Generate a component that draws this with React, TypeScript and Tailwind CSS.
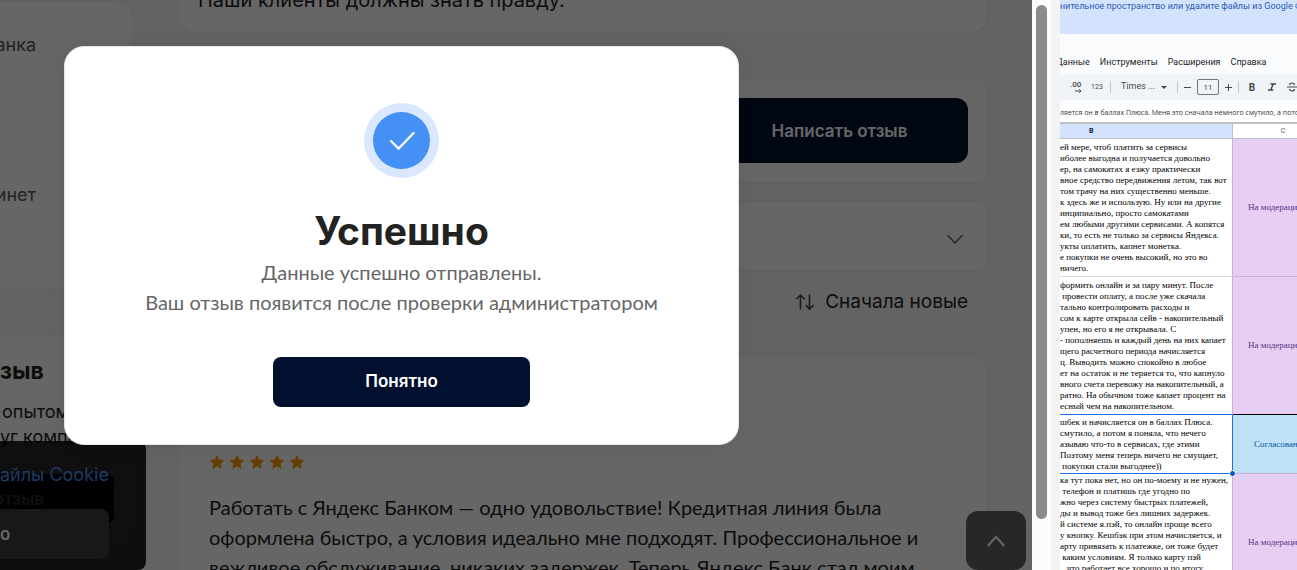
import type { ReactNode } from 'react';
import { clsx } from 'clsx';

const reviewLines = [
  'Работать с Яндекс Банком — одно удовольствие! Кредитная линия была',
  'оформлена быстро, а условия идеально мне подходят. Профессиональное и',
  'вежливое обслуживание, никаких задержек. Теперь Яндекс Банк стал моим',
];

type SheetRow = {
  id: number;
  lines: string[];
  status: string;
  approved?: boolean;
  height: string;
};

const sheetRows: SheetRow[] = [
  {
    id: 1,
    height: 'h-[138px]',
    status: 'На модерации',
    lines: [
      'ей мере, чтоб платить за сервисы',
      'иболее выгодна и получается довольно',
      'ер, на самокатах я езжу практически',
      'вное средство передвижения летом, так вот',
      'том трачу на них существенно меньше.',
      'к здесь же и использую. Ну или на другие',
      'инципиально, просто самокатами',
      'ем любыми другими сервисами. А копятся',
      'ки, то есть не только за сервисы Яндекса.',
      'укты оплатить, капнет монетка.',
      'е покупки не очень высокий, но это во',
      'ничего.',
    ],
  },
  {
    id: 2,
    height: 'h-[138px]',
    status: 'На модерации',
    lines: [
      'формить онлайн и за пару минут. После',
      ' провести оплату, а после уже скачала',
      'тально контролировать расходы и',
      'сом к карте открыла сейв - накопительный',
      'упен, но его я не открывала. С',
      '- пополняешь и каждый день на них капает',
      'щего расчетного периода начисляется',
      'ц. Выводить можно спокойно в любое',
      'ет на остаток и не теряется то, что капнуло',
      'вного счета перевожу на накопительный, а',
      'ратно. На обычном тоже капает процент на',
      'есный чем на накопительном.',
    ],
  },
  {
    id: 3,
    height: 'h-[59px]',
    status: 'Согласовано',
    approved: true,
    lines: [
      'шбек и начисляется он в баллах Плюса.',
      'смутило, а потом я поняла, что нечего',
      'азываю что-то в сервисах, где этими',
      'Поэтому меня теперь ничего не смущает,',
      ' покупки стали выгоднее))',
    ],
  },
  {
    id: 4,
    height: 'h-[138px]',
    status: 'На модерации',
    lines: [
      'ка тут пока нет, но он по-моему и не нужен,',
      ' телефон и платишь где угодно по',
      'жно через систему быстрых платежей,',
      'ды и вывод тоже без лишних задержек.',
      'й системе я.пэй, то онлайн проще всего',
      'у кнопку. Кешбэк при этом начисляется, и',
      'арту привязать к платежке, он тоже будет',
      ' каким условиям. Я только карту пэй',
      '   что работает все хорошо и по итогу',
    ],
  },
];

function Card({ className, children }: { className?: string; children?: ReactNode }) {
  return <div className={clsx('border border-[#ebebeb] bg-white', className)}>{children}</div>;
}

function Star() {
  return (
    <svg viewBox="0 0 16 16" className="size-4" fill="#ff9900" aria-hidden="true">
      <path d="M8 .8l2.2 4.7 5.2.6-3.8 3.6 1 5.2L8 12.3l-4.6 2.6 1-5.2L.6 6.1l5.2-.6z" />
    </svg>
  );
}

function Sidebar() {
  return (
    <aside className="w-[134px] shrink-0 whitespace-nowrap font-['Inter',sans-serif] text-[18px] leading-[30px]">
      <Card className="mt-px h-[289px] rounded-r-[18px] border-l-0 pt-7 text-[#555]">
        <p className="flex w-9 justify-end">анка</p>
        <p className="mt-30 flex w-9 justify-end">инет</p>
      </Card>
      <Card className="mt-11 h-[211px] rounded-r-[18px] border-l-0 pt-5 text-[#222]">
        <h2 className="text-[23px] font-bold leading-8">зыв</h2>
        <div className="mt-3 leading-[25px]">
          <p className="pl-0.5">опытом</p>
          <p>уг компаний</p>
        </div>
        <button className="mt-[25px] flex h-[50px] w-[114px] items-center justify-end rounded-r-lg bg-[#02102f] pr-[70px] text-[17px] font-semibold text-white">
          отзыв
        </button>
      </Card>
    </aside>
  );
}

function Reviews() {
  return (
    <main className="min-w-0 flex-1 font-['Inter',sans-serif] text-[20px] leading-[30px] text-[#222]">
      <Card className="flex h-[34px] flex-col justify-end rounded-b-[18px] border-t-0 px-[19px] pb-[18px]">
        <p>Наши клиенты должны знать правду.</p>
      </Card>
      <Card className="mt-11 flex justify-end rounded-xl p-[19px]">
        <button className="h-[65px] w-[257px] rounded-xl bg-[#02102f] text-[17px] font-semibold text-white">
          Написать отзыв
        </button>
      </Card>
      <Card className="mt-[18px] rounded-xl">
        <button aria-label="Развернуть" className="flex h-[68px] w-full items-center justify-end pr-6 pt-1.5">
          <svg viewBox="0 0 16 16" className="size-4" fill="none" stroke="#666" strokeWidth="1.6" aria-hidden="true">
            <path d="M.5 4.2L8 11.8l7.5-7.6" />
          </svg>
        </button>
      </Card>
      <div className="flex justify-end pb-[38px] pr-5 pt-4">
        <button className="flex items-center gap-2.5 text-[19px]">
          <svg viewBox="0 0 20 18" className="h-[18px] w-5" fill="none" stroke="#444" strokeWidth="1.6" aria-hidden="true">
            <path d="M5.5 16.5V2M1.2 6.2L5.5 2l4.2 4.2M14.500 1.500V16M10.700 12l3.800 4 4.200-4" />
          </svg>
          Сначала новые
        </button>
      </div>
      <Card className="rounded-t-[18px] border-b-0 px-[30px] pb-8 pt-[98px]">
        <div className="flex gap-1">
          <Star />
          <Star />
          <Star />
          <Star />
          <Star />
        </div>
        <div className="mt-[22px] whitespace-nowrap font-['Lato',sans-serif]">
          {reviewLines.map((line) => (
            <p key={line}>{line}</p>
          ))}
        </div>
      </Card>
    </main>
  );
}

function CookieNotice() {
  return (
    <div className="absolute bottom-0 left-0 h-[129px] w-[146px] rounded-r-lg bg-black/85 pt-[19px] font-['Inter',sans-serif] text-[18px] leading-[30px]">
      <a href="#cookie" className="block whitespace-nowrap text-[#4990f2]">
        айлы Cookie
      </a>
      <button className="mt-[19px] flex h-[50px] w-[109px] items-center rounded-r-lg bg-[#3c3c3c] text-[17px] font-semibold text-white">
        о
      </button>
    </div>
  );
}

function SuccessModal() {
  return (
    <div
      role="dialog"
      aria-labelledby="modal-title"
      className="absolute left-16 top-[46px] flex w-[675px] flex-col items-center rounded-[20px] border border-[#e5e5e5] bg-white pb-[37px] pt-14 text-center shadow-[0_0_20px_rgba(0,0,0,0.08)]"
    >
      <div className="flex size-[75px] items-center justify-center rounded-full bg-[#dae8ff]">
        <div className="flex size-[57px] items-center justify-center rounded-full bg-[#4590f4]">
          <svg viewBox="0 0 26 20" className="h-5 w-[26px]" fill="none" stroke="#fff" strokeWidth="2.2" strokeLinecap="round" aria-hidden="true">
            <path d="M2 10l7.600 7.600L24.600 2" />
          </svg>
        </div>
      </div>
      <h1 id="modal-title" className="mt-[29px] font-['Inter',sans-serif] text-[39px] font-bold leading-12 text-[#222]">
        Успешно
      </h1>
      <p className="mt-0.5 font-['Lato',sans-serif] text-[20px] leading-[30px] text-[#666]">
        Данные успешно отправлены.
        <br />
        Ваш отзыв появится после проверки администратором
      </p>
      <button className="mt-10 h-[50px] w-[257px] rounded-lg bg-[#02102f] font-['Inter',sans-serif] text-[17px] font-semibold text-white">
        Понятно
      </button>
    </div>
  );
}

function ReviewSite() {
  return (
    <div className="relative min-w-0 flex-1 overflow-hidden bg-[#f8f8f8]">
      <div className="flex gap-11 pr-11">
        <Sidebar />
        <Reviews />
      </div>
      <CookieNotice />
      <button
        aria-label="Наверх"
        className="absolute bottom-0 right-1.5 flex h-[59px] w-[60px] items-center justify-center rounded-xl bg-[#626262]"
      >
        <svg viewBox="0 0 18 12" className="h-3 w-[18px]" fill="none" stroke="#fff" strokeWidth="2" aria-hidden="true">
          <path d="M.8 11L9 1.800l8.200 9.200" />
        </svg>
      </button>
      <div className="absolute inset-0 bg-black/60" />
      <SuccessModal />
    </div>
  );
}

function ScrollTrack() {
  return (
    <div className="flex w-7 shrink-0">
      <div className="w-[19px] bg-[#fcfcfc] pl-1 pt-[5px]">
        <div className="h-[514px] w-[11px] rounded-full bg-[#8b8b8b]" />
      </div>
      <div className="flex-1 bg-[#f3f3f3]" />
    </div>
  );
}

function Divider() {
  return <span className="h-3 w-px shrink-0 bg-[#c7c7c7]" />;
}

function Toolbar() {
  return (
    <div className="flex h-[26px] items-center gap-1.5 overflow-hidden bg-[#f0f4f9] pl-2.5 text-[8px] text-[#444746]">
      <button aria-label="Увеличить число знаков" className="w-[14px] shrink-0 text-left font-medium leading-2">
        .00
        <svg viewBox="0 0 14 4" className="h-1 w-[14px]" fill="none" stroke="#444746" aria-hidden="true">
          <path d="M5 2h6M9.200.3L11 2 9.200 3.700" />
        </svg>
      </button>
      <button className="w-[14px] shrink-0 text-[7px]">123</button>
      <Divider />
      <div className="relative w-[54px] shrink-0">
        <select aria-label="Шрифт" className="w-full appearance-none bg-transparent pl-1 text-[9px]">
          <option>Times ...</option>
        </select>
        <svg viewBox="0 0 6 3" className="pointer-events-none absolute right-1 top-1.5 h-[3px] w-1.5" fill="#444746" aria-hidden="true">
          <path d="M0 0h6L3 3z" />
        </svg>
      </div>
      <Divider />
      <button aria-label="Уменьшить размер" className="w-[7px] shrink-0">
        <svg viewBox="0 0 7 7" className="size-[7px]" stroke="#444746" aria-hidden="true">
          <path d="M0 3.500h7" />
        </svg>
      </button>
      <input
        aria-label="Размер шрифта"
        defaultValue="11"
        className="h-4 w-[22px] shrink-0 rounded-xs border border-[#747775] text-center text-[8px]"
      />
      <button aria-label="Увеличить размер" className="w-[7px] shrink-0">
        <svg viewBox="0 0 7 7" className="size-[7px]" stroke="#444746" aria-hidden="true">
          <path d="M0 3.500h7M3.500 0v7" />
        </svg>
      </button>
      <Divider />
      <button className="w-[14px] shrink-0 text-[10px] font-bold">B</button>
      <button aria-label="Курсив" className="flex w-[14px] shrink-0 justify-center">
        <svg viewBox="0 0 8 8" className="size-2" fill="none" stroke="#444746" strokeWidth="1.4" aria-hidden="true">
          <path d="M2.500 1H8M0 7h5.400M5.200 1L2.800 7" />
        </svg>
      </button>
      <button aria-label="Зачёркнутый" className="flex w-[14px] shrink-0 justify-center">
        <svg viewBox="0 0 10 10" className="size-2.5" fill="none" stroke="#444746" strokeWidth="1.2" aria-hidden="true">
          <path d="M0 5h10M7.600 3C7.200 1.600 6.200 1 5 1 3.500 1 2.500 1.800 2.500 3M2.400 7C2.800 8.400 3.800 9 5 9c1.500 0 2.500-.8 2.500-2" />
        </svg>
      </button>
    </div>
  );
}

function Spreadsheet() {
  return (
    <section className="w-[237px] shrink-0 overflow-hidden bg-[#f9fbfd] font-['Roboto',sans-serif]">
      <p className="h-[34px] whitespace-nowrap bg-[#d3e3fd] text-[9px] leading-3 text-[#2f5bb7]">
        нительное пространство или удалите файлы из Google Фото
      </p>
      <nav className="-ml-1 flex h-10 items-end gap-2.5 pb-1.5 text-[9px] leading-3 text-[#1f1f1f]">
        <button>Данные</button>
        <button>Инструменты</button>
        <button>Расширения</button>
        <button>Справка</button>
      </nav>
      <Toolbar />
      <p className="mt-1 h-[18px] whitespace-nowrap bg-white font-['Open_Sans',sans-serif] text-[7px] leading-[18px] text-[#333]">
        ляется он в баллах Плюса. Меня это сначала немного смутило, а потом
      </p>
      <table className="w-full table-fixed border-separate border-spacing-0 border-t-2 border-[#c0c0c0] bg-white">
        <thead>
          <tr className="h-[15px] text-[7px] leading-3">
            <th className="w-[173px] border-b border-r border-[#c0c0c0] bg-[#d3e3fd] p-0 pl-[29px] text-left font-bold text-[#041e49]">
              B
            </th>
            <th className="border-b border-[#c0c0c0] p-0 pl-9 font-normal text-[#575a5a]">C</th>
          </tr>
        </thead>
        <tbody>
          {sheetRows.map((row) => (
            <tr key={row.id} className={row.height}>
              <td
                className={clsx(
                  'relative whitespace-pre border-r p-0 font-["Liberation_Serif",serif] text-[9px] leading-[11px] text-black',
                  row.approved
                    ? 'border-b border-[#1a73e8]'
                    : row.id === 2
                      ? 'border-b border-b-[#1a73e8] border-r-[#c5b3d0]'
                      : 'border-b border-b-[#dcdcdc] border-r-[#c5b3d0]',
                  row.id === 4 ? 'pt-px align-top' : 'align-middle',
                )}
              >
                {row.lines.map((line) => (
                  <div key={line}>{line}</div>
                ))}
                {row.approved && (
                  <span className="absolute -bottom-1 -right-1 z-10 size-[7px] rounded-full border border-white bg-[#0b57d0]" />
                )}
              </td>
              <td
                className={clsx(
                  'overflow-hidden whitespace-nowrap border-b p-0 align-middle font-["Liberation_Serif",serif] text-[9px] leading-[11px]',
                  row.approved ? 'bg-[#bfe1f6] pl-[21px] text-[#0a53a8]' : 'bg-[#e6cff2] pl-[15px] text-[#5a3286]',
                  row.id === 2 ? 'border-black' : 'border-[#c5b3d0]',
                )}
              >
                {row.status}
              </td>
            </tr>
          ))}
        </tbody>
      </table>
    </section>
  );
}

export default function App() {
  return (
    <div className="flex h-screen overflow-hidden">
      <ReviewSite />
      <ScrollTrack />
      <Spreadsheet />
    </div>
  );
}
